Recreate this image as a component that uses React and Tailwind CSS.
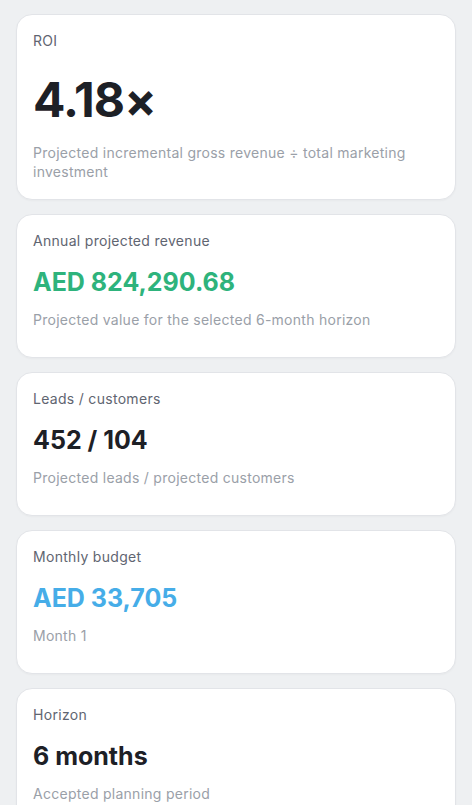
export default function App() {
  const cards = [
    { label: "Annual projected revenue", value: "AED 824,290.68", color: "text-[#2eb37c]", desc: "Projected value for the selected 6-month horizon" },
    { label: "Leads / customers", value: "452 / 104", color: "text-[#1d2026]", desc: "Projected leads / projected customers" },
    { label: "Monthly budget", value: "AED 33,705", color: "text-[#46ade8]", desc: "Month 1" },
    { label: "Horizon", value: "6 months", color: "text-[#1d2026]", desc: "Accepted planning period" },
  ];
  return (
    <div className="min-h-[805px] h-[805px] overflow-hidden bg-[#eef0f2] px-4 pt-[14px] flex flex-col gap-[14px] font-['Inter',sans-serif]">
      <div className="bg-white border border-[#e2e4e8] rounded-2xl px-4 pt-4 pb-[18px] shadow-[0_1px_2px_rgba(0,0,0,0.03)] shrink-0">
        <div className="text-sm leading-5 text-[#5f6571] tracking-[0.3px]">ROI</div>
        <div className="mt-[21px] text-[48px] leading-[56px] font-bold tracking-[-0.8px] text-[#1d2026]">4.18×</div>
        <div className="mt-[15px] text-sm leading-[19px] text-[#9aa0a8] tracking-[0.27px]">Projected incremental gross revenue ÷ total marketing investment</div>
      </div>
      {cards.map((c) => (
        <div key={c.label} className="bg-white border border-[#e2e4e8] rounded-2xl px-4 pt-4 pb-[27px] shadow-[0_1px_2px_rgba(0,0,0,0.03)] shrink-0">
          <div className="text-sm leading-5 text-[#5f6571] tracking-[0.3px]">{c.label}</div>
          <div className={`mt-[15px] text-[25px] leading-8 font-bold ${c.color}`}>{c.value}</div>
          <div className="mt-3 text-sm leading-5 text-[#9aa0a8] tracking-[0.27px]">{c.desc}</div>
        </div>
      ))}
    </div>
  );
}
